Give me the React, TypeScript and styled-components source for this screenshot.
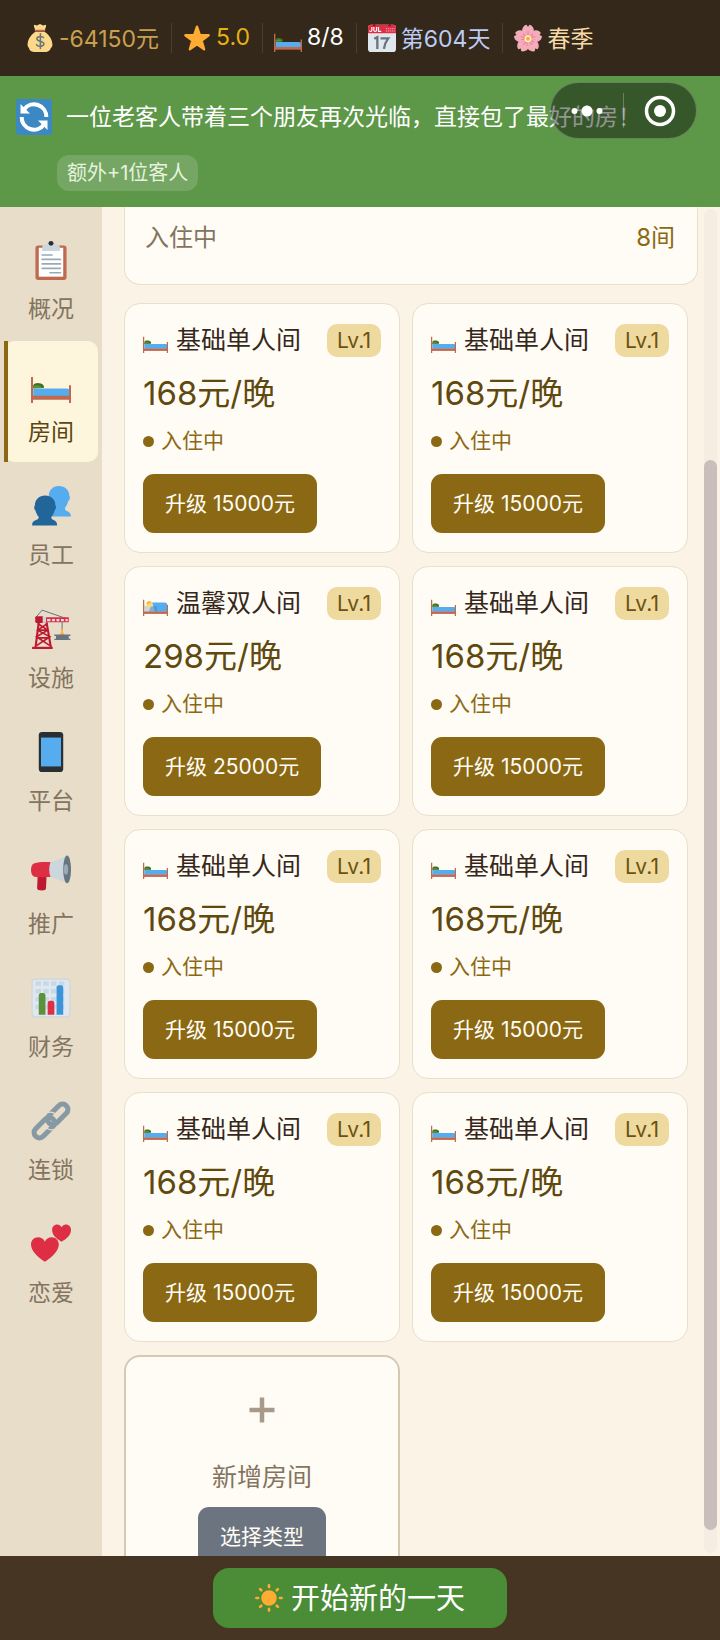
import React, { useState } from "react";
import styled, { createGlobalStyle } from "styled-components";

type IconName =
  | "money"
  | "star"
  | "bed"
  | "sleeper"
  | "calendar"
  | "blossom"
  | "refresh"
  | "clipboard"
  | "people"
  | "crane"
  | "phone"
  | "megaphone"
  | "chart"
  | "link"
  | "hearts"
  | "sun";

const petals = [0, 72, 144, 216, 288];
const rays = [0, 45, 90, 135, 180, 225, 270, 315];

const drawings: Record<IconName, React.ReactNode> = {
  money: (
    <>
      <path
        fill="#fdd888"
        d="M12 10C5 15 2 21 2 27c0 2 1 3 2 4 0 3 3 5 6 5h16c3 0 5-2 6-5 1-1 2-2 2-4 0-6-3-12-10-17z"
      />
      <path fill="#fdd888" d="M11 1l3 1 4-2 4 2 3-1 1 1-2 7H12L10 2z" />
      <path stroke="#bf6952" strokeWidth="2" strokeLinecap="round" d="M12 8.500h12" />
      <path
        fill="none"
        stroke="#67757f"
        strokeWidth="2"
        strokeLinecap="round"
        d="M22.500 17.500c-1-2-8.500-2.500-8.500 1.500s9 2.500 9 6.500-8 4-9.500 1M18.500 12.500v19"
      />
    </>
  ),
  star: (
    <path
      fill="#ffac33"
      stroke="#ffac33"
      strokeWidth="3"
      strokeLinejoin="round"
      d="M18 3.500l3.700 10.700 11.300.200-9 6.900 3.200 11.200L18 26l-9.200 6.500L12 21.300 3 14.400l11.300-.200z"
    />
  ),
  bed: (
    <>
      <path fill="#3e721d" d="M2 20c1-2 4-2.500 7-1.500 2 .700 3 2 2.500 4L2 23z" />
      <path fill="#5c913b" d="M2 21c3-1.500 6-1.500 8 1.500H2z" />
      <path fill="#55acee" d="M2 23h30c2 0 3 1 3 2.500V30H2z" />
      <path fill="#c1694f" d="M1 29.500h34V33H1z" />
      <path fill="#c1694f" d="M0 12.500h1.800V36H0zM34.200 20H36v16h-1.800z" />
    </>
  ),
  sleeper: (
    <>
      <path fill="#ccd6dd" d="M2 21h12l3 9H2z" />
      <circle cx="9" cy="19.500" r="4" fill="#ffdc5d" />
      <path fill="#ffac33" d="M5 18.500c0-4 5-5 8-1.500-3-.500-4 0-5 2z" />
      <path fill="#55acee" d="M13 16.500h18c3 0 4 2 4 4V30H17z" />
      <path fill="#3b88c3" d="M14 22h6v8H9c0-4 2-8 5-8z" opacity=".5" />
      <path fill="#c1694f" d="M1 29.500h34V33H1z" />
      <path fill="#c1694f" d="M0 12.500h1.800V36H0zM34.200 20H36v16h-1.800z" />
    </>
  ),
  calendar: (
    <>
      <rect y="1" width="36" height="35" rx="4" fill="#e1e8ed" />
      <path fill="#dd2e44" d="M0 12V5c0-3 2-4 4-4h28c2 0 4 1 4 4v7z" />
      <path
        fill="none"
        stroke="#fff"
        strokeWidth="1.500"
        d="M5 4v4.500c0 1.500-3 1.500-3 0M7.500 4v4c0 2 3.500 2 3.500 0V4M13.500 4v5.500H17"
      />
      <path stroke="#f4abba" strokeWidth="1.300" strokeDasharray="1.500 1" d="M23 6h12M23 9h12" />
      <circle cx="8" cy="1.500" r="1.500" fill="#a0041e" />
      <circle cx="28" cy="1.500" r="1.500" fill="#a0041e" />
      <path fill="none" stroke="#67757f" strokeWidth="3" d="M8 19l4-2v15M16 18.500h10c-3 4-5 8-5.500 13.500" />
    </>
  ),
  blossom: (
    <>
      {petals.map((angle) => (
        <g key={angle} transform={`rotate(${angle} 18 19)`}>
          <path fill="#f4abba" d="M18 20c-7-5-9-11-6.500-15.500 1-2 3-3.500 4.500-3.500l2 2.500L20 1c1.500 0 3.500 1.500 4.500 3.500C27 9 25 15 18 20z" />
          <path stroke="#ea7a95" strokeWidth="1.200" d="M18 17V9M17 16l-3-5M19 16l3-5" />
        </g>
      ))}
      <circle cx="18" cy="19" r="4.500" fill="#fff0b5" />
      <circle cx="18" cy="19" r="2.500" fill="#ffac33" />
    </>
  ),
  refresh: (
    <>
      <rect width="36" height="36" rx="3" fill="#3b88c3" />
      <path
        fill="none"
        stroke="#fff"
        strokeWidth="4"
        d="M8 10.500A12.300 12.300 0 0 1 30.300 18M28 25.500A12.300 12.300 0 0 1 5.700 18"
      />
      <path fill="#fff" d="M4.500 5v9.500H14zM31.500 31v-9.500H22z" />
    </>
  ),
  clipboard: (
    <>
      <rect x="4" y="5" width="28" height="31" rx="2.500" fill="#c1694f" />
      <path fill="#fff" d="M7 7h22v26H7z" />
      <path fill="#ccd6dd" d="M10 10V7c0-2 1-3 3-3h1.500C15 2 16 1 18 1s3 1 3.500 3H23c2 0 3 1 3 3v3z" />
      <circle cx="18" cy="3" r="2.200" fill="#292f33" />
      <path
        stroke="#99aab5"
        strokeWidth="1.500"
        strokeLinecap="round"
        d="M10 13.500h9M10 17.500h16.500M10 21.500h16.500M10 25.500h16.500M17 29.500h9.500"
      />
    </>
  ),
  people: (
    <>
      <path
        fill="#55acee"
        d="M16 9c0-5.500 4-9 9-9 5.500 0 9.500 3.500 9.500 9 1 .500.500 3.500-1 4.500-.700 3-2 5-3 6.500-.300 3.500 5.500 2 5.500 7.500H16z"
      />
      <path
        fill="#269"
        d="M3.500 17.500c0-5.500 4-9 9.200-9 5.300 0 9.300 3.500 9.300 9 1 .700.500 3.500-.800 4.500-.500 2.500-1.700 4.500-3 6 0 4 5.300 1.500 5.300 7.500H1c0-6 6-3.500 6-7.500-1.300-1.500-2.300-3.500-3-6-1.300-1-1.500-3.800-.500-4.500z"
      />
    </>
  ),
  crane: (
    <>
      <path fill="none" stroke="#66757f" strokeWidth=".900" d="M10 1L4 8M10 1l23 8M28 10v9" />
      <path fill="#dd2e44" d="M4 7.500h30V12H4z" />
      <path fill="#e1e8ed" d="M14.500 9h3v2h-3zM19 9h2.500v2H19zM23 9h2.500v2H23zM27 9h2.500v2H27zM31 9h2v2h-2z" />
      <rect x="4" y="6.500" width="7" height="6" rx="1" fill="#be1931" />
      <path fill="#ccd6dd" d="M10.500 7h3v5h-3z" />
      <path fill="none" stroke="#be1931" strokeWidth="1.900" d="M7 12L4 35M14 12l4 23" />
      <path
        fill="none"
        stroke="#be1931"
        strokeWidth="1.500"
        d="M6 13l9 6-10 6 12 8M15 13l-9 6 11 6-12 8M6 19h9M5 26h12"
      />
      <path fill="#be1931" d="M1 34h18.500v2H1z" />
      <path fill="none" stroke="#ffac33" strokeWidth="1.500" d="M28 18v3l-1.500 2.500h3L28 21" />
      <path fill="#66757f" d="M21 23h14.500v1.200H34v2.600h1.500V28H21v-1.200h1.500v-2.600H21z" />
    </>
  ),
  phone: (
    <>
      <rect x="7" width="22" height="36" rx="3" fill="#292f33" />
      <path fill="#55acee" d="M9 5h18v26H9z" />
    </>
  ),
  megaphone: (
    <>
      <path fill="#be1931" d="M6 19h8l-.500 11c0 1.500-1.500 2-3.500 2-3 0-4.500-.500-4.500-2z" />
      <path fill="#dd2e44" d="M3 7.500c4-1.300 9-1.300 15-1v13c-6 .500-10 .700-15 0-2-.500-3-3-3-6s1-5 3-6z" />
      <path fill="#ccd6dd" d="M17.500 6.500C23 5 28 2.500 33 .500v25c-5-2-10-4.500-15.500-6-1.500-4-1.500-9 0-13z" />
      <ellipse cx="32.500" cy="13" rx="3.500" ry="12.500" fill="#66757f" />
      <ellipse cx="31.500" cy="13" rx="2" ry="5" fill="#99aab5" />
    </>
  ),
  chart: (
    <>
      <rect x="1" y="1" width="34" height="34" rx="3" fill="#e1e8ed" stroke="#ccd6dd" />
      <path stroke="#c5d9ea" strokeWidth="4" strokeDasharray="5 2" d="M4 5h28M4 12h28M4 19h28M4 26h28" />
      <path fill="#5c913b" d="M7 15.500c0-1.500 1-2 3-2s3 .500 3 2V33H7z" />
      <path fill="#dd2e44" d="M15 22.500c0-1.500 1-2 3-2s3 .500 3 2V33h-6z" />
      <path fill="#3b94d9" d="M23 8.500c0-1.500 1-2 3-2s3 .500 3 2V33h-6z" />
    </>
  ),
  link: (
    <g fill="none" stroke="#8899a6" strokeWidth="4.600">
      <rect x="13" y="7.200" width="22" height="9.600" rx="4.800" transform="rotate(-45 24 12)" />
      <rect x="1" y="19.200" width="22" height="9.600" rx="4.800" transform="rotate(-45 12 24)" />
      <path stroke="#e7ddc8" strokeWidth="1" d="M15 10.500c3-1 6 0 8 2.500M13 23c2 2.500 5 3.500 8 2.500" />
    </g>
  ),
  hearts: (
    <path
      fill="#dd2e44"
      d="M12.500 34C6 30 0 24 0 18.500 0 14.500 3 12 6.500 12c2.500 0 5 1.500 6 4 1-2.500 3.500-4 6-4 3.500 0 6.500 2.500 6.500 6.500 0 5.500-6 11.500-12.500 15.500zM27.500 16C23 13.500 19 10 19 5.500 19 2.500 21 .500 23.500.500c1.700 0 3.300 1 4 2.500.700-1.500 2.300-2.500 4-2.500C34 .500 36 2.500 36 5.500c0 4.500-4 8-8.500 10.500z"
    />
  ),
  sun: (
    <>
      <circle cx="18" cy="18" r="10" fill="#ffac33" />
      {rays.map((angle) => (
        <path
          key={angle}
          stroke="#ffac33"
          strokeWidth="3.400"
          strokeLinecap="round"
          d="M18 1.800v2.200"
          transform={`rotate(${angle} 18 18)`}
        />
      ))}
    </>
  ),
};

const Emoji: React.FC<{ name: IconName; size: number }> = ({ name, size }) => (
  <Svg width={size} height={size} viewBox="0 0 36 36" aria-hidden="true">
    {drawings[name]}
  </Svg>
);

const stats: { icon: IconName; text: string; color: string }[] = [
  { icon: "money", text: "-64150元", color: "#c9a050" },
  { icon: "star", text: "5.0", color: "#e8b10f" },
  { icon: "bed", text: "8/8", color: "#ffffff" },
  { icon: "calendar", text: "第604天", color: "#bccbf5" },
  { icon: "blossom", text: "春季", color: "#f7d9a8" },
];

const tabs: { icon: IconName; label: string }[] = [
  { icon: "clipboard", label: "概况" },
  { icon: "bed", label: "房间" },
  { icon: "people", label: "员工" },
  { icon: "crane", label: "设施" },
  { icon: "phone", label: "平台" },
  { icon: "megaphone", label: "推广" },
  { icon: "chart", label: "财务" },
  { icon: "link", label: "连锁" },
  { icon: "hearts", label: "恋爱" },
];

interface Room {
  icon: IconName;
  name: string;
  price: number;
  upgrade: number;
}

const single: Room = { icon: "bed", name: "基础单人间", price: 168, upgrade: 15000 };
const double: Room = { icon: "sleeper", name: "温馨双人间", price: 298, upgrade: 25000 };
const rooms: Room[] = [single, single, double, single, single, single, single, single];

const RoomCard: React.FC<{ room: Room }> = ({ room }) => (
  <Card>
    <CardHeader>
      <Emoji name={room.icon} size={25} />
      <RoomName>{room.name}</RoomName>
      <Level>Lv.1</Level>
    </CardHeader>
    <Price>{room.price}元/晚</Price>
    <Status>入住中</Status>
    <ActionButton>升级 {room.upgrade}元</ActionButton>
  </Card>
);

const App: React.FC = () => {
  const [active, setActive] = useState("房间");

  return (
    <Page>
      <GlobalStyle />
      <StatBar>
        {stats.map((stat) => (
          <Stat key={stat.icon} $color={stat.color}>
            <Emoji name={stat.icon} size={28} />
            <StatText>{stat.text}</StatText>
          </Stat>
        ))}
      </StatBar>
      <Notice>
        <NoticeRow>
          <Emoji name="refresh" size={36} />
          一位老客人带着三个朋友再次光临，直接包了最好的房！
        </NoticeRow>
        <Tag>额外+1位客人</Tag>
        <Capsule>
          <CapsuleButton aria-label="更多">
            <svg width="32" height="14" viewBox="0 0 32 14" fill="#fff">
              <circle cx="3.500" cy="7" r="3" />
              <circle cx="16" cy="7" r="5.500" />
              <circle cx="28.500" cy="7" r="3" />
            </svg>
          </CapsuleButton>
          <CapsuleButton aria-label="关闭">
            <svg width="32" height="32" viewBox="0 0 32 32">
              <circle cx="16" cy="16" r="13.500" fill="none" stroke="#fff" strokeWidth="3.500" />
              <circle cx="16" cy="16" r="6" fill="#fff" />
            </svg>
          </CapsuleButton>
        </Capsule>
      </Notice>
      <Body>
        <Sidebar>
          {tabs.map((tab) => (
            <TabButton
              key={tab.label}
              $active={tab.label === active}
              onClick={() => setActive(tab.label)}
            >
              <Emoji name={tab.icon} size={40} />
              {tab.label}
            </TabButton>
          ))}
        </Sidebar>
        <Content>
          <Summary>
            <span>入住中</span>
            <SummaryValue>8间</SummaryValue>
          </Summary>
          <RoomGrid>
            {rooms.map((room, index) => (
              <RoomCard key={index} room={room} />
            ))}
            <AddCard>
              <svg width="26" height="26" viewBox="0 0 26 26" aria-hidden="true">
                <path stroke="#a89a8a" strokeWidth="4.500" d="M13 0.500v25M0.500 13h25" />
              </svg>
              <AddTitle>新增房间</AddTitle>
              <ActionButton $muted>选择类型</ActionButton>
            </AddCard>
          </RoomGrid>
        </Content>
        <ScrollTrack>
          <ScrollThumb />
        </ScrollTrack>
      </Body>
      <Footer>
        <StartButton>
          <Emoji name="sun" size={28} />
          <StartLabel>开始新的一天</StartLabel>
        </StartButton>
      </Footer>
    </Page>
  );
};

export default App;

const GlobalStyle = createGlobalStyle`
  * {
    box-sizing: border-box;
  }

  body {
    margin: 0;
    font-family: Inter, "Noto Sans CJK SC", sans-serif;
    background: #faf3e6;
  }

  button {
    font-family: inherit;
    border: none;
    padding: 0;
    cursor: pointer;
  }
`;

const Svg = styled.svg`
  display: block;
  flex-shrink: 0;
`;

const Page = styled.div`
  display: flex;
  flex-direction: column;
  height: 100vh;
`;

const StatBar = styled.header`
  display: flex;
  align-items: center;
  flex-shrink: 0;
  height: 76px;
  padding: 0 14px;
  background: #332819;
`;

const Stat = styled.div<{ $color: string }>`
  display: flex;
  align-items: center;
  gap: 5px;
  height: 30px;
  padding: 0 12px;
  font-size: 23px;
  white-space: nowrap;
  color: ${({ $color }) => $color};

  & + & {
    border-left: 1px solid #4a3e2e;
    padding-left: 11px;
  }
`;

const StatText = styled.span`
  padding-bottom: 2px;
`;

const Notice = styled.section`
  position: relative;
  flex-shrink: 0;
  padding: 23px 16px 16px;
  background: #5d9748;
  color: #fff;
`;

const NoticeRow = styled.div`
  display: flex;
  align-items: center;
  gap: 14px;
  font-size: 23px;
  line-height: 36px;
`;

const Tag = styled.span`
  display: block;
  width: fit-content;
  margin: 20px 0 0 41px;
  padding: 0 10px;
  border-radius: 12px;
  background: rgba(255, 255, 255, 0.15);
  color: #e6f3df;
  font-size: 20px;
  line-height: 36px;
`;

const Capsule = styled.div`
  position: absolute;
  top: 6px;
  right: 23px;
  display: flex;
  width: 147px;
  height: 57px;
  border: 1px solid rgba(255, 255, 255, 0.25);
  border-radius: 29px;
  background: rgba(0, 0, 0, 0.42);
`;

const CapsuleButton = styled.button`
  flex: 1;
  display: flex;
  align-items: center;
  justify-content: center;
  margin: 10px 0;
  background: transparent;

  & + & {
    border-left: 1px solid rgba(255, 255, 255, 0.25);
  }
`;

const Body = styled.div`
  position: relative;
  flex: 1;
  min-height: 0;
  display: flex;
`;

const Sidebar = styled.nav`
  display: flex;
  flex-direction: column;
  gap: 2px;
  flex-shrink: 0;
  width: 102px;
  padding: 11px 4px 0;
  overflow: hidden;
  background: #e7ddc8;
`;

const TabButton = styled.button<{ $active: boolean }>`
  position: relative;
  display: flex;
  flex-direction: column;
  align-items: center;
  gap: 14px;
  flex-shrink: 0;
  padding: 22px 0 15px;
  border-radius: 10px;
  background: ${({ $active }) => ($active ? "#fdf6dd" : "transparent")};
  color: ${({ $active }) => ($active ? "#5c4510" : "#84745f")};
  font-size: 23px;
  line-height: 30px;

  &::before {
    content: "";
    display: ${({ $active }) => ($active ? "block" : "none")};
    position: absolute;
    left: 0;
    top: 0;
    bottom: 0;
    width: 4px;
    background: #8b6914;
  }
`;

const Content = styled.main`
  flex: 1;
  min-width: 0;
  padding: 0 22px;
  overflow-y: auto;
  scrollbar-width: none;
`;

const Summary = styled.section`
  display: flex;
  justify-content: space-between;
  padding: 15px 22px 30px 20px;
  border: 1px solid #e8dfcd;
  border-top: none;
  border-radius: 0 0 16px 16px;
  background: #fffcf5;
  color: #84745f;
  font-size: 24px;
  line-height: 32px;
`;

const SummaryValue = styled.span`
  color: #8b6914;
`;

const RoomGrid = styled.div`
  display: grid;
  grid-template-columns: 1fr 1fr;
  gap: 13px 12px;
  margin: 18px 10px 18px 0;
`;

const Card = styled.article`
  display: flex;
  flex-direction: column;
  align-items: flex-start;
  padding: 20px 18px 19px;
  border: 1px solid #e8dfcd;
  border-radius: 16px;
  background: #fffcf5;
`;

const CardHeader = styled.div`
  display: flex;
  align-items: center;
  align-self: stretch;
  gap: 8px;
  height: 33px;
`;

const RoomName = styled.h3`
  flex: 1;
  margin: 0;
  color: #35271b;
  font-size: 25px;
  font-weight: 400;
  line-height: 33px;
  white-space: nowrap;
`;

const Level = styled.span`
  padding: 0 10px;
  border-radius: 10px;
  background: #eed99e;
  color: #6b5210;
  font-size: 21px;
  line-height: 33px;
`;

const Price = styled.div`
  margin-top: 14px;
  color: #5f490f;
  font-size: 33px;
  line-height: 44px;
`;

const Status = styled.div`
  display: flex;
  align-items: center;
  gap: 7px;
  margin: 12px 0 19px;
  color: #8b6914;
  font-size: 21px;
  line-height: 28px;

  &::before {
    content: "";
    width: 11px;
    height: 11px;
    border-radius: 50%;
    background: #8b6914;
  }
`;

const ActionButton = styled.button<{ $muted?: boolean }>`
  height: 59px;
  padding: 0 22px 4px;
  border-radius: 11px;
  background: ${({ $muted }) => ($muted ? "#6c757f" : "#8b6914")};
  color: #fffdf5;
  font-size: 21px;
  white-space: nowrap;
`;

const AddCard = styled.article`
  display: flex;
  flex-direction: column;
  align-items: center;
  padding: 40px 18px;
  border: 2px solid #d5c9b3;
  border-radius: 16px;
  background: #fffcf5;
`;

const AddTitle = styled.h3`
  margin: 38px 0 13px;
  color: #84745f;
  font-size: 25px;
  font-weight: 400;
  line-height: 33px;
`;

const ScrollTrack = styled.div`
  position: absolute;
  top: 2px;
  right: 3px;
  bottom: 3px;
  width: 13px;
  border-radius: 7px;
  background: #f5ece2;
`;

const ScrollThumb = styled.div`
  position: absolute;
  top: 18.7%;
  width: 100%;
  height: 79.6%;
  border-radius: 7px;
  background: #c9bebb;
`;

const Footer = styled.footer`
  display: flex;
  align-items: center;
  justify-content: center;
  flex-shrink: 0;
  height: 84px;
  background: #473523;
`;

const StartButton = styled.button`
  display: flex;
  align-items: center;
  gap: 8px;
  height: 60px;
  padding: 0 42px;
  border-radius: 16px;
  background: #4b8c37;
  color: #fff;
  font-size: 29px;
`;

const StartLabel = styled.span`
  padding-bottom: 4px;
`;
